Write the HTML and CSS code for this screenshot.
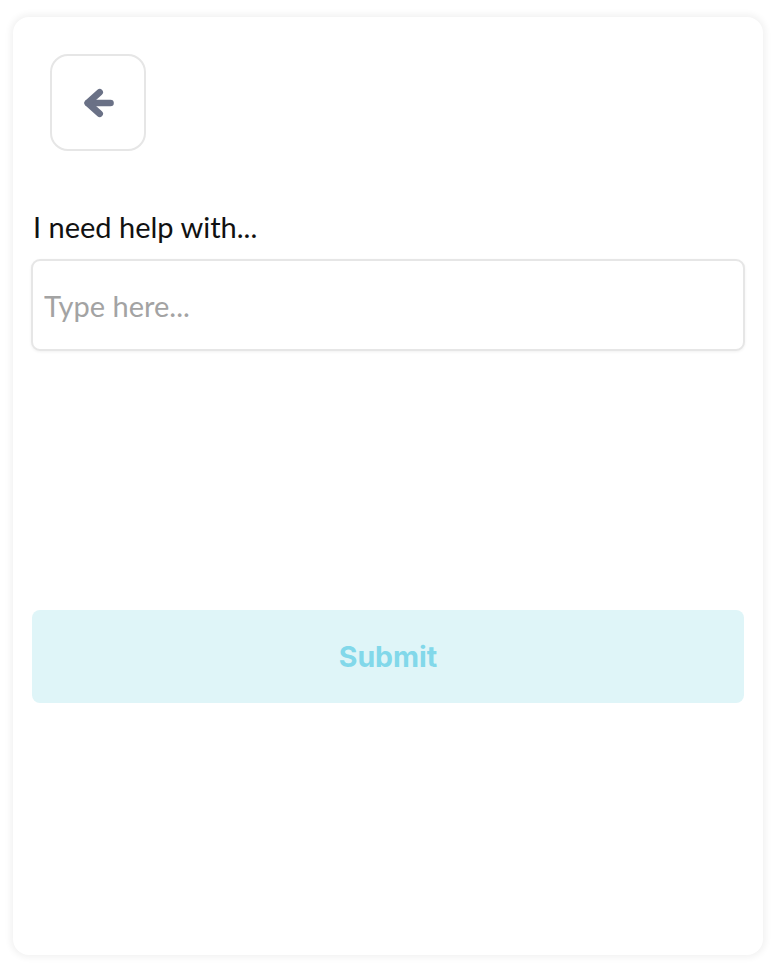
FILE: index.html
```html
<!DOCTYPE html>
<html lang="en">
<head>
  <meta charset="UTF-8" />
  <meta name="viewport" content="width=device-width, initial-scale=1.0"/>
  <title>Help request</title>
  <link rel="stylesheet" href="styles.css">
</head>
<body>
  <div class="card">
    <div class="top-bar">
      <button class="back-btn" type="button" aria-label="Back">
        <svg width="40" height="40" viewBox="0 0 24 24" fill="none" stroke="#6a7186" stroke-width="4" stroke-linecap="round" stroke-linejoin="round">
          <path d="M6 12h13.5"/>
          <path d="M13 5.5L5.8 12l7.2 6.5"/>
        </svg>
      </button>
    </div>

    <label class="field-label" for="help">I need help with...</label>
    <input class="field-input" id="help" type="text" placeholder="Type here...">

    <button class="submit-btn" type="button" disabled>Submit</button>
  </div>
</body>
</html>
```

FILE: styles.css
```css
body {
  margin: 0;
  padding: 17px 14px 25px 13px;
  background: #fff;
  font-family: Lato, "Open Sans", sans-serif;
}
.card {
  height: 938px;
  box-sizing: border-box;
  background: #fff;
  border-radius: 16px;
  box-shadow: 0 0 6px 3px rgba(0, 0, 0, 0.05);
  padding: 37px 18px 18px 18px;
}
.top-bar {
  padding-left: 19px;
}
.back-btn {
  width: 96px;
  height: 97px;
  border: 2px solid #e6e6e6;
  border-radius: 18px;
  background: #fff;
  display: flex;
  align-items: center;
  justify-content: center;
  padding: 0;
}
.field-label {
  display: block;
  margin: 58px 0 0 2px;
  font-size: 29px;
  line-height: 36px;
  color: #111;
}
.field-input {
  display: block;
  box-sizing: border-box;
  width: 100%;
  height: 92px;
  margin-top: 14px;
  padding: 0 11px;
  border: 2px solid #e6e6e6;
  border-radius: 9px;
  box-shadow: 0 1px 3px rgba(0, 0, 0, 0.06);
  font-family: Lato, sans-serif;
  font-size: 29px;
  color: #333;
  outline: none;
}
.field-input::placeholder {
  color: #a3a3a3;
}
.submit-btn {
  display: block;
  width: calc(100% - 2px);
  height: 93px;
  margin: 259px 0 0 1px;
  border: none;
  border-radius: 8px;
  background: #dff5f8;
  color: #82d8ea;
  font-family: Inter, sans-serif;
  font-weight: 700;
  font-size: 28.5px;
}
```
